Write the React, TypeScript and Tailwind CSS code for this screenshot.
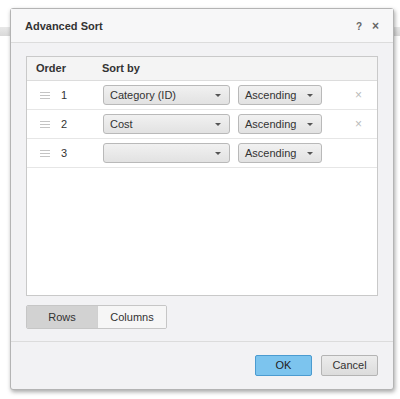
import React from "react";

const Caret = () => (
  <svg width="6" height="3" viewBox="0 0 6 3" className="shrink-0">
    <path d="M0 0 L6 0 L3 3 Z" fill="#555" />
  </svg>
);

const Select = ({ value, w }: { value: string; w: string }) => (
  <div
    className={`${w} h-[20px] flex items-center justify-between pl-[6px] pr-[8px] rounded-[3px] border border-[#b9b9b9] bg-gradient-to-b from-[#f1f1f1] to-[#e2e2e2] text-[11px] text-[#333]`}
  >
    <span>{value}</span>
    <Caret />
  </div>
);

const Handle = () => (
  <svg width="10" height="7" viewBox="0 0 10 7">
    <rect x="0" y="0" width="10" height="1" fill="#c4c4c4" />
    <rect x="0" y="3" width="10" height="1" fill="#c4c4c4" />
    <rect x="0" y="6" width="10" height="1" fill="#c4c4c4" />
  </svg>
);

const Row = ({ n, field, del }: { n: string; field: string; del: boolean }) => (
  <div className="h-[29px] flex items-center border-b border-[#e6e6e6]">
    <div className="w-[13px]" />
    <Handle />
    <div className="w-[11px]" />
    <span className="w-[42px] text-[11px] text-[#333]">{n}</span>
    <Select value={field} w="w-[127px]" />
    <div className="w-[8px]" />
    <Select value="Ascending" w="w-[84px]" />
    <div className="flex-1 flex justify-center pl-[18px]">
      {del && <span className="text-[12px] text-[#bbb] leading-none">×</span>}
    </div>
  </div>
);

export default function App() {
  return (
    <div
      className="relative w-[400px] h-[399px] bg-white overflow-hidden"
      style={{ fontFamily: "'Liberation Sans', Arial, sans-serif" }}
    >
      <div className="absolute left-0 right-0 top-[27px] h-[9px] bg-gradient-to-b from-[#e8e8e8] to-[#d9d9d9]" />
      <div className="absolute left-[10px] top-[8px] w-[384px] h-[382px] flex flex-col bg-[#f2f2f4] border border-[#b4b4b4] rounded-[3px] shadow-[1px_2px_4px_rgba(0,0,0,0.35)]">
        <div className="h-[34px] shrink-0 flex items-center justify-between pl-[14px] pr-[14px] pt-[1px] border-b border-[#dcdcdc] bg-[#f7f7f8]">
          <span className="text-[11px] font-bold text-[#333]">Advanced Sort</span>
          <div className="flex items-center gap-[10px] text-[10px] font-bold text-[#666]">
            <span>?</span>
            <span className="text-[12px]">×</span>
          </div>
        </div>
        <div className="flex-1 flex flex-col px-[15px] pt-[13px]">
          <div className="h-[240px] bg-white border border-[#c9c9c9] flex flex-col">
            <div className="h-[24px] shrink-0 flex items-center bg-[#f4f4f4] border-b border-[#dcdcdc] text-[11px] font-bold text-[#333]">
              <span className="pl-[9px] w-[75px]">Order</span>
              <span>Sort by</span>
            </div>
            <Row n="1" field="Category (ID)" del />
            <Row n="2" field="Cost" del />
            <Row n="3" field="" del={false} />
          </div>
          <div className="mt-[9px] w-[141px] h-[24px] flex border border-[#c6c6c6] rounded-[2px] overflow-hidden text-[11px] text-[#333]">
            <div className="w-[70px] flex items-center justify-center bg-[#d2d2d2]">Rows</div>
            <div className="flex-1 flex items-center justify-center bg-[#f6f6f6] border-l border-[#d0d0d0]">Columns</div>
          </div>
        </div>
        <div className="h-[48px] shrink-0 border-t border-[#dcdcdc] flex items-center justify-end gap-[9px] pr-[15px]">
          <div className="w-[57px] h-[21px] flex items-center justify-center rounded-[2px] border border-[#4b9bd0] bg-[#7cc4ee] text-[11px] text-[#222]">OK</div>
          <div className="w-[57px] h-[21px] flex items-center justify-center rounded-[2px] border border-[#b4b4b4] bg-gradient-to-b from-[#ececec] to-[#dcdcdc] text-[11px] text-[#333]">Cancel</div>
        </div>
      </div>
    </div>
  );
}
